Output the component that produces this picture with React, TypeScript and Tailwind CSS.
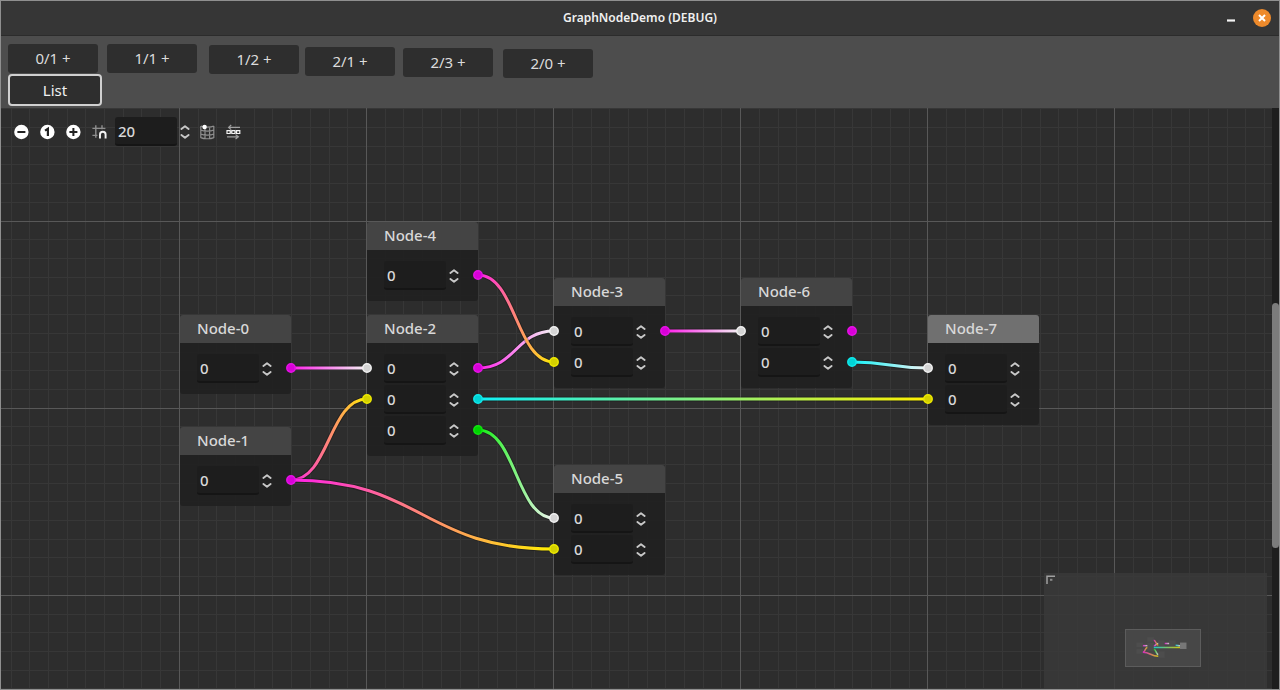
import React, { useState } from "react";

type Port = "magenta" | "white" | "yellow" | "cyan" | "green";

const PORT_FILL: Record<Port, string> = {
  magenta: "#d900d9",
  white: "#d4d4d4",
  yellow: "#d4d000",
  cyan: "#00d4d6",
  green: "#00d400",
};
const PORT_RING: Record<Port, string> = {
  magenta: "#e612e6",
  white: "#f0f0f0",
  yellow: "#ece800",
  cyan: "#10e8ea",
  green: "#10e610",
};
const WIRE: Record<Port, string> = {
  magenta: "#ff1eea",
  white: "#f4f4f4",
  yellow: "#fff000",
  cyan: "#10f0f6",
  green: "#10f010",
};

interface GraphNode {
  id: number;
  x: number;
  y: number;
  left: (Port | null)[];
  right: (Port | null)[];
  selected?: boolean;
}

const NODE_W = 111;
const ROW = 31;
const HEADER = 28;

const NODES: GraphNode[] = [
  { id: 0, x: 179, y: 207, left: [null], right: ["magenta"] },
  { id: 1, x: 179, y: 319, left: [null], right: ["magenta"] },
  { id: 4, x: 366, y: 114, left: [null], right: ["magenta"] },
  { id: 2, x: 366, y: 207, left: ["white", "yellow", null], right: ["magenta", "cyan", "green"] },
  { id: 3, x: 553, y: 170, left: ["white", "yellow"], right: ["magenta", null] },
  { id: 5, x: 553, y: 357, left: ["white", "yellow"], right: [null, null] },
  { id: 6, x: 740, y: 170, left: ["white", null], right: ["magenta", "cyan"] },
  { id: 7, x: 927, y: 207, left: ["white", "yellow"], right: [null, null], selected: true },
];

// [from node, from row, to node, to row]
const LINKS: [number, number, number, number][] = [
  [0, 0, 2, 0],
  [1, 0, 2, 1],
  [1, 0, 5, 1],
  [2, 0, 3, 0],
  [4, 0, 3, 1],
  [2, 1, 7, 1],
  [2, 2, 5, 0],
  [3, 0, 6, 0],
  [6, 1, 7, 0],
];

const byId = (id: number) => NODES.find((n) => n.id === id)!;
const portY = (n: GraphNode, row: number) => n.y + HEADER + 25 + row * ROW;
const nodeH = (n: GraphNode) => HEADER + 20 + n.left.length * ROW;

function Wires({ prefix, width, outline }: { prefix: string; width: number; outline?: boolean }) {
  return (
    <>
      {LINKS.map(([a, ar, b, br], i) => {
        const from = byId(a);
        const to = byId(b);
        const x1 = from.x + NODE_W;
        const x2 = to.x;
        const y1 = portY(from, ar);
        const y2 = portY(to, br);
        const half = (x2 - x1) / 2;
        const d = `M${x1} ${y1}C${x1 + half} ${y1} ${x2 - half} ${y2} ${x2} ${y2}`;
        return (
          <g key={i} fill="none">
            <linearGradient id={`${prefix}${i}`} gradientUnits="userSpaceOnUse" x1={x1} y1="0" x2={x2} y2="0">
              <stop offset="0" stopColor={WIRE[from.right[ar]!]} />
              <stop offset="1" stopColor={WIRE[to.left[br]!]} />
            </linearGradient>
            {outline && <path d={d} stroke="#000" strokeOpacity="0.25" strokeWidth={width + 2} />}
            <path d={d} stroke={`url(#${prefix}${i})`} strokeWidth={width} />
          </g>
        );
      })}
    </>
  );
}

function Grid() {
  const step = 18.71;
  const lines = Array.from({ length: 220 }, (_, i) => i);
  return (
    <svg className="absolute inset-0 h-full w-full" shapeRendering="crispEdges" aria-hidden="true">
      {[false, true].map((major) =>
        lines
          .filter((i) => (i % 10 === 0) === major)
          .map((i) => {
            const x = Math.round(-9.2 + i * step) + 0.5;
            const y = Math.round(-74.5 + i * step) + 0.5;
            const stroke = major ? "#585858" : "#373737";
            return (
              <g key={i} stroke={stroke}>
                <line x1={x} x2={x} y1="0" y2="100%" />
                <line x1="0" x2="100%" y1={y} y2={y} />
              </g>
            );
          }),
      )}
    </svg>
  );
}

function SpinBox({ label, initial }: { label: string; initial: number }) {
  const [value, setValue] = useState(String(initial));
  const step = (n: number) => setValue(String((Number(value) || 0) + n));
  return (
    <div className="flex items-center gap-0.5">
      <input
        aria-label={label}
        value={value}
        onChange={(e) => setValue(e.target.value)}
        className="h-[29px] w-[62px] rounded-[3px] border-b-2 border-[#151515] bg-[#1d1d1d] px-[3px] text-[15px] font-medium text-[#d8d8d8] outline-none"
      />
      <div className="flex w-3 flex-col gap-1">
        <button type="button" aria-label={`Increase ${label}`} onClick={() => step(1)}>
          <svg viewBox="0 0 12 5" className="block h-[5px] w-3" fill="none" stroke="#c8c8c8" strokeWidth="1.9" strokeLinecap="round" strokeLinejoin="round">
            <path d="M2.4 4 6 1.2 9.6 4" />
          </svg>
        </button>
        <button type="button" aria-label={`Decrease ${label}`} onClick={() => step(-1)}>
          <svg viewBox="0 0 12 5" className="block h-[5px] w-3" fill="none" stroke="#c8c8c8" strokeWidth="1.9" strokeLinecap="round" strokeLinejoin="round">
            <path d="M2.4 1 6 3.8 9.6 1" />
          </svg>
        </button>
      </div>
    </div>
  );
}

function NodeCard({ node }: { node: GraphNode }) {
  return (
    <section
      className="absolute overflow-hidden rounded-[3px]"
      style={{ left: node.x, top: node.y, width: NODE_W }}
    >
      <h2
        className={
          "h-7 pl-[17px] text-[15px] leading-[26px] font-medium text-[#d8d8d8] " +
          (node.selected ? "bg-[#707070]" : "bg-[#444444]")
        }
      >
        Node-{node.id}
      </h2>
      <div className="flex flex-col gap-0.5 bg-[#212121]/95 py-[11px] pl-[17px]">
        {node.left.map((_, row) => (
          <SpinBox key={row} label={`Node-${node.id} value ${row + 1}`} initial={0} />
        ))}
      </div>
    </section>
  );
}

function Ports() {
  return (
    <>
      {NODES.flatMap((n) =>
        (["left", "right"] as const).flatMap((side) =>
          n[side].map((port, row) =>
            port ? (
              <circle
                key={`${n.id}${side}${row}`}
                cx={side === "left" ? n.x : n.x + NODE_W}
                cy={portY(n, row)}
                r="4.2"
                fill={PORT_FILL[port]}
                stroke={PORT_RING[port]}
                strokeWidth="1.5"
              />
            ) : null,
          ),
        ),
      )}
    </>
  );
}

function IconButton({ label, children }: { label: string; children: React.ReactNode }) {
  return (
    <button type="button" aria-label={label} className="flex h-4 w-4 items-center justify-center">
      <svg viewBox="0 0 16 16" className="h-4 w-4" fill="none">
        {children}
      </svg>
    </button>
  );
}

function CanvasToolbar() {
  return (
    <div className="absolute top-[9px] left-3 flex items-center gap-2.5">
      <IconButton label="Zoom out">
        <circle cx="8.4" cy="8" r="7.2" fill="#fff" />
        <path d="M4.4 8h8" stroke="#222" strokeWidth="2" />
      </IconButton>
      <IconButton label="Reset zoom">
        <circle cx="8.4" cy="8" r="7.2" fill="#fff" />
        <path d="M6 6.6 8.9 4.8V12" stroke="#222" strokeWidth="2.2" />
      </IconButton>
      <IconButton label="Zoom in">
        <circle cx="8.4" cy="8" r="7.2" fill="#fff" />
        <path d="M4.4 8h8M8.4 4v8" stroke="#222" strokeWidth="2" />
      </IconButton>
      <div className="flex items-center gap-2">
        <IconButton label="Use snap">
          <path d="M4.8 1.2v12.6M11 1.2v4M1.4 4.4h13M1.4 11.4h5" stroke="#8e8e8e" strokeWidth="1.4" />
          <path d="M9 14.6v-4a2.8 2.8 0 0 1 5.6 0v4" stroke="#f2f2f2" strokeWidth="1.9" />
        </IconButton>
        <SpinBox label="Snap distance" initial={20} />
        <IconButton label="Toggle minimap">
          <path
            d="M1.8 2c3 1.5 10 1.5 13 0M1.8 6c3 1.5 10 1.5 13 0M1.8 10c3 1.5 10 1.5 13 0M1.8 13.6c3 1.5 10 1.5 13 0M1.8 2v12M6 3v12M10.6 3v12M14.8 2v12"
            stroke="#8e8e8e"
            strokeWidth="1.2"
          />
          <circle cx="5.6" cy="3" r="2.2" fill="#fff" />
        </IconButton>
      </div>
      <IconButton label="Arrange nodes">
        <path d="M4 3.4h11M6.2 1 3.6 3.4l2.6 2.2M2 12.8h11M10.6 10.6l2.8 2.2-2.8 2.2" stroke="#a0a0a0" strokeWidth="1.2" />
        <path d="M2 6.6h3.2v2.9H2zM6.8 6.6H10v2.9H6.8zM11.6 6.6h3.2v2.9h-3.2zM5 8h2M10 8h2" stroke="#f2f2f2" strokeWidth="1.2" />
      </IconButton>
    </div>
  );
}

function Minimap() {
  return (
    <div className="absolute right-[5px] bottom-0 h-[116px] w-[223px] bg-[#3a3a3a]/80">
      <svg className="absolute top-0.5 left-0.5 h-2.5 w-2.5" viewBox="0 0 10 10" fill="none" aria-hidden="true">
        <path d="M1 9V1.2h8" stroke="#a0a0a0" strokeWidth="1.5" />
        <path d="M4 4.8h2.4" stroke="#8a8a8a" strokeWidth="2" />
      </svg>
      <svg
        className="absolute right-[66px] bottom-[22px] h-[38px] w-[76px] border border-[#5c5c5c] bg-[#474747]"
        viewBox="0 0 1270 600"
        role="img"
        aria-label="Graph overview"
      >
        {NODES.map((n) => (
          <rect key={n.id} x={n.x} y={n.y} width={NODE_W} height={nodeH(n)} fill={n.selected ? "#777" : "#4d4d4d"} />
        ))}
        <g opacity="0.75">
          <Wires prefix="mini" width={26} />
        </g>
      </svg>
    </div>
  );
}

const ADD_BUTTONS = [
  { label: "0/1 +", place: "" },
  { label: "1/1 +", place: "ml-[3px]" },
  { label: "1/2 +", place: "mt-px ml-1.5" },
  { label: "2/1 +", place: "mt-[3px]" },
  { label: "2/3 +", place: "mt-1 ml-0.5" },
  { label: "2/0 +", place: "mt-[5px] ml-1" },
];

export default function App() {
  return (
    <div
      className="flex h-screen flex-col overflow-hidden border border-[#8f8f8f] bg-[#2d2d2d]"
      style={{ fontFamily: '"Noto Sans", "Open Sans", sans-serif' }}
    >
      <header className="grid h-[35px] shrink-0 grid-cols-[1fr_auto_1fr] items-center border-b border-[#2c2c2c] bg-[#363636]">
        <h1 className="col-start-2 text-xs font-semibold text-[#f0f0f0]">GraphNodeDemo (DEBUG)</h1>
        <div className="flex items-center justify-end gap-[18px] pr-2">
          <button type="button" aria-label="Minimize" className="flex h-4 w-2 items-center justify-center">
            <svg viewBox="0 0 8 8" className="mt-1 h-2 w-2">
              <path d="M0 4.5h8" stroke="#f4f4f4" strokeWidth="2.2" />
            </svg>
          </button>
          <button
            type="button"
            aria-label="Close"
            className="flex h-[18px] w-[18px] items-center justify-center rounded-full bg-[#ee8a2b]"
          >
            <svg viewBox="0 0 8 8" className="h-2 w-2">
              <path d="M1 1l6 6M7 1 1 7" stroke="#fff" strokeWidth="2" />
            </svg>
          </button>
        </div>
      </header>

      <div className="shrink-0 bg-[#4d4d4d] px-[7px] pt-2 pb-0.5 text-[15px] text-[#dcdcdc]">
        <div className="flex h-[30px] items-start gap-1.5">
          {ADD_BUTTONS.map((b) => (
            <button
              key={b.label}
              type="button"
              className={"h-[29px] w-[90px] shrink-0 rounded-[3px] bg-[#2e2e2e] " + b.place}
            >
              {b.label}
            </button>
          ))}
        </div>
        <button
          type="button"
          className="block h-8 w-[94px] rounded-[4px] border-2 border-[#d0d0d0] bg-[#2e2e2e] text-[#f0f0f0]"
        >
          List
        </button>
      </div>

      <main className="relative min-h-0 flex-1 overflow-hidden">
        <div className="flex h-full">
          <div className="relative flex-1 overflow-hidden">
            <Grid />
            {NODES.map((n) => (
              <NodeCard key={n.id} node={n} />
            ))}
            <svg className="pointer-events-none absolute inset-0 h-full w-full" aria-hidden="true">
              <Wires prefix="wire" width={3} outline />
              <Ports />
            </svg>
            <CanvasToolbar />
            <Minimap />
          </div>
          <div className="flex w-[7px] flex-col bg-[#1e1e1e]">
            <div className="basis-[33.5%]" />
            <div className="basis-[42.2%] rounded-full bg-[#7c7c7c]" />
          </div>
        </div>
      </main>
    </div>
  );
}
